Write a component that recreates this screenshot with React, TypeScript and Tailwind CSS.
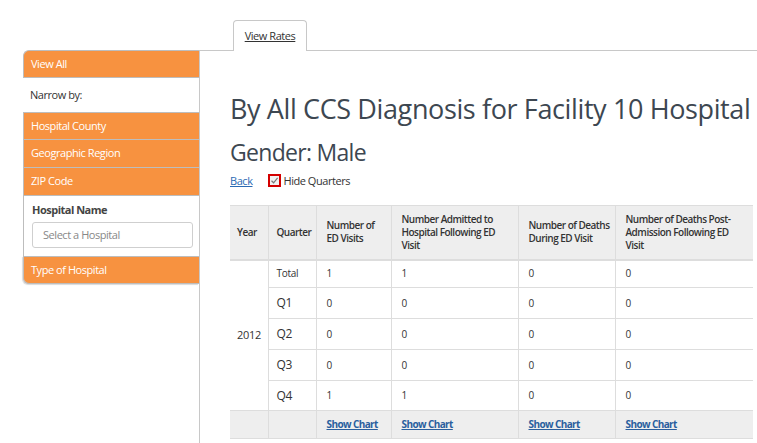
import React from 'react';

const ORANGE = 'bg-[#f79240]';

const rows = [
  { q: 'Total', big: false, v: ['1', '1', '0', '0'], h: 'h-[28px]' },
  { q: 'Q1', big: true, v: ['0', '0', '0', '0'], h: 'h-[31px]' },
  { q: 'Q2', big: true, v: ['0', '0', '0', '0'], h: 'h-[31px]' },
  { q: 'Q3', big: true, v: ['0', '0', '0', '0'], h: 'h-[31px]' },
  { q: 'Q4', big: true, v: ['1', '1', '0', '0'], h: 'h-[30px]' },
];

const headers = [
  { t: 'Year', c: 'pl-[7px]' },
  { t: 'Quarter', c: 'pl-[8px] border-l' },
  { t: 'Number of ED Visits', c: 'pl-[10px] pr-[6px] border-l' },
  { t: 'Number Admitted to Hospital Following ED Visit', c: 'pl-[10px] pr-[6px] border-l' },
  { t: 'Number of Deaths During ED Visit', c: 'pl-[10px] pr-[2px] border-l' },
  { t: 'Number of Deaths Post-Admission Following ED Visit', c: 'pl-[10px] pr-[6px] border-l' },
];

const NavBar = ({ label, cls = '' }: { label: string; cls?: string }) => (
  <div className={`${ORANGE} h-[28px] flex items-center pl-[7px] text-[11px] tracking-[-0.45px] text-white border-l border-b border-[#bdbdbd] ${cls}`}>
    {label}
  </div>
);

export default function App() {
  return (
    <div className="w-[757px] h-[443px] overflow-hidden bg-white text-[#333]" style={{ fontFamily: '"Open Sans", "Liberation Sans", sans-serif' }}>
      {/* ── TABS ── */}
      <div className="h-[50px] flex">
        <div className="w-[233px] shrink-0" />
        <div className="mt-[20px] h-[31px] w-[74px] bg-white border border-b-0 border-[#c8c8c8] rounded-t-[4px] relative z-10 flex items-center justify-center">
          <span className="text-[11px] tracking-[-0.45px] underline text-[#333]">View Rates</span>
        </div>
      </div>

      <div className="flex">
        {/* ── SIDEBAR ── */}
        <div className="w-[199px] shrink-0 pl-[23px]">
          <NavBar label="View All" cls="border-t rounded-tl-[6px]" />
          <div className="h-[34px] flex items-center pl-[7px] text-[11px] tracking-[-0.45px] text-[#333]">Narrow by:</div>
          <NavBar label="Hospital County" cls="border-t" />
          <NavBar label="Geographic Region" />
          <NavBar label="ZIP Code" />
          <div className="h-[60px] border-l border-[#bdbdbd] pl-[8px] pr-[6px] pt-[7px]">
            <div className="text-[11px] font-bold tracking-[-0.5px] text-[#444] leading-[14px]">Hospital Name</div>
            <div className="mt-[5px] h-[26px] border border-[#cfcfcf] rounded-[3px] flex items-center pl-[10px] text-[11px] tracking-[-0.45px] text-[#888]">
              Select a Hospital
            </div>
          </div>
          <NavBar label="Type of Hospital" cls="border-t rounded-bl-[6px] shadow-[-1px_1px_1px_rgba(0,0,0,0.15)]" />
        </div>

        {/* ── CONTENT ── */}
        <div className="flex-1 border-l border-t border-[#c8c8c8] pl-[30px] h-[393px]">
          <h1 className="mt-[44px] text-[27px] tracking-[-0.38px] leading-[28px] text-[#3d4751] whitespace-nowrap">
            By All CCS Diagnosis for Facility 10 Hospital
          </h1>
          <h2 className="mt-[18px] text-[23px] tracking-[-0.7px] leading-[23px] text-[#3d4751]">Gender: Male</h2>
          <div className="mt-[10px] h-[13px] flex items-center text-[11px] tracking-[-0.45px] leading-[13px]">
            <a className="text-[#2a6ab3] underline">Back</a>
            <span className="ml-[16px] w-[13px] h-[13px] border-2 border-[#d40000] bg-[#f2f2f2] flex items-center justify-center">
              <svg width="9" height="9" viewBox="0 0 9 9">
                <path d="M1.5 4.8 L3.6 6.8 L7.6 1.8" fill="none" stroke="#7a7a7a" strokeWidth="1.2" />
              </svg>
            </span>
            <span className="ml-[2px] text-[#333]">Hide Quarters</span>
          </div>

          <table className="mt-[18px] table-fixed border-collapse w-[523px] text-[10px] tracking-[-0.3px] text-[#333]">
            <colgroup>
              <col className="w-[38px]" />
              <col className="w-[48px]" />
              <col className="w-[75px]" />
              <col className="w-[127px]" />
              <col className="w-[97px]" />
              <col className="w-[138px]" />
            </colgroup>
            <thead>
              <tr className="bg-[#eeeeee] h-[54px]">
                {headers.map(h => (
                  <th
                    key={h.t}
                    className={`text-left font-semibold tracking-[-0.5px] leading-[13px] border-t border-b-2 border-[#dddddd] ${h.c}`}
                  >
                    {h.t}
                  </th>
                ))}
              </tr>
            </thead>
            <tbody>
              {rows.map((r, idx) => (
                <tr key={r.q} className={r.h}>
                  {idx === 0 && (
                    <td rowSpan={5} className="px-[7px] text-[11px] align-middle">2012</td>
                  )}
                  <td className={`px-[8px] border-l border-b border-[#dddddd] ${r.big ? 'text-[12px]' : 'text-[10px]'}`}>{r.q}</td>
                  {r.v.map((v, i) => (
                    <td key={i} className="px-[10px] border-l border-b border-[#dddddd]">{v}</td>
                  ))}
                </tr>
              ))}
              <tr className="bg-[#eeeeee] h-[28px]">
                <td className="border-b border-t border-[#dddddd]" />
                <td className="border-l border-b border-[#dddddd]" />
                {[0, 1, 2, 3].map(i => (
                  <td key={i} className="px-[10px] border-l border-b border-[#dddddd] whitespace-nowrap">
                    <a className="font-bold tracking-[-0.6px] underline text-[#2a5f9e]">Show Chart</a>
                  </td>
                ))}
              </tr>
            </tbody>
          </table>
        </div>
      </div>
    </div>
  );
}
